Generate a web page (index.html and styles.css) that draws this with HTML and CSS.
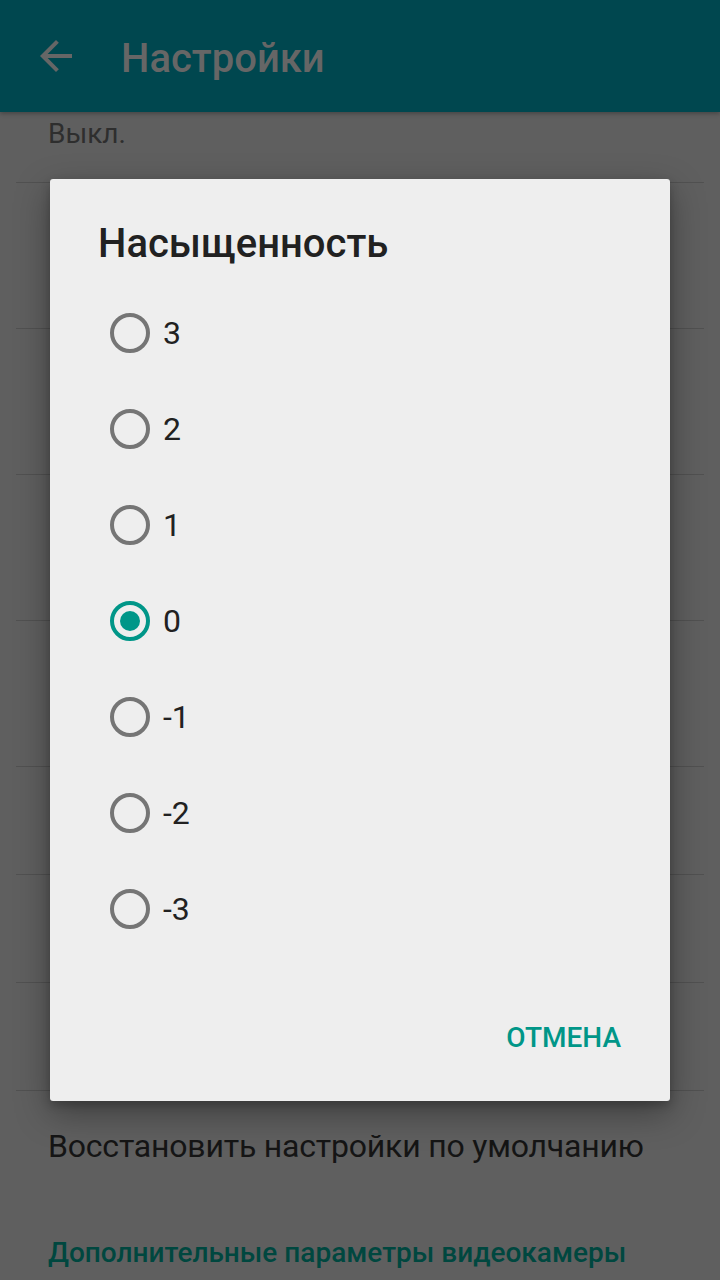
FILE: index.html
```html
<!DOCTYPE html>
<html lang="ru">
<head>
<meta charset="utf-8">
<title>Настройки</title>
<link rel="stylesheet" href="styles.css">
</head>
<body>
<div class="screen">
  <header class="appbar">
    <svg class="back" viewBox="0 0 24 24" width="48" height="48" aria-hidden="true">
      <path d="M20 11H7.83l5.59-5.59L12 4l-8 8 8 8 1.41-1.41L7.83 13H20v-2z" fill="#666666"/>
    </svg>
    <h1 class="appbar-title">Настройки</h1>
  </header>

  <main class="list">
    <div class="row row-first"><span class="summary">Выкл.</span></div>
    <div class="divider"></div>
    <div class="row row-tall"></div>
    <div class="divider"></div>
    <div class="row row-tall"></div>
    <div class="divider"></div>
    <div class="row row-tall"></div>
    <div class="divider"></div>
    <div class="row row-tall"></div>
    <div class="divider"></div>
    <div class="row row-mid"></div>
    <div class="divider"></div>
    <div class="row row-mid"></div>
    <div class="divider"></div>
    <div class="row row-mid"></div>
    <div class="divider"></div>
    <div class="row row-restore"><span class="restore">Восстановить настройки по умолчанию</span></div>
    <div class="category">Дополнительные параметры видеокамеры</div>
  </main>

  <div class="dialog" role="dialog">
    <h2 class="dialog-title">Насыщенность</h2>
    <ul class="options">
      <li class="option"><span class="radio"></span><span class="label">3</span></li>
      <li class="option"><span class="radio"></span><span class="label">2</span></li>
      <li class="option"><span class="radio"></span><span class="label">1</span></li>
      <li class="option"><span class="radio checked"></span><span class="label">0</span></li>
      <li class="option"><span class="radio"></span><span class="label">-1</span></li>
      <li class="option"><span class="radio"></span><span class="label">-2</span></li>
      <li class="option"><span class="radio"></span><span class="label">-3</span></li>
    </ul>
    <div class="actions"><span class="btn">ОТМЕНА</span></div>
  </div>
</div>
</body>
</html>
```

FILE: styles.css
```css
* { box-sizing: border-box; }
html, body {
  margin: 0;
  padding: 0;
}
body {
  width: 720px;
  height: 1280px;
  overflow: hidden;
  background: #5f5f5f;
  font-family: Roboto, "Noto Sans", "DejaVu Sans", sans-serif;
}
.screen {
  position: relative;
  width: 720px;
  height: 1280px;
  overflow: hidden;
}
.appbar {
  height: 112px;
  background: #00474f;
  display: flex;
  align-items: center;
  padding-left: 32px;
  box-shadow: 0 2px 4px rgba(0,0,0,0.25);
  position: relative;
  z-index: 1;
}
.back { display: block; }
.appbar-title {
  margin: 4px 0 0 41px;
  font-size: 40px;
  font-weight: 500;
  color: #666666;
  line-height: 47px;
}
.list {
  display: flex;
  flex-direction: column;
}
.row {
  padding: 0 48px;
  display: flex;
  flex-direction: column;
}
.row-first { height: 70px; padding-top: 5px; }
.row-tall { height: 145px; }
.row-mid { height: 107px; }
.row-restore { height: 120px; padding-top: 36px; }
.divider {
  height: 1px;
  margin: 0 16px;
  background: #515151;
}
.summary {
  font-size: 28px;
  color: #2e2e2e;
  line-height: 33px;
}
.restore {
  font-size: 32px;
  letter-spacing: -0.2px;
  color: #151515;
  line-height: 38px;
}
.category {
  padding: 25px 48px 0;
  font-size: 28px;
  font-weight: 500;
  color: #00473f;
  line-height: 33px;
}
.dialog {
  position: absolute;
  left: 50px;
  top: 179px;
  width: 620px;
  height: 922px;
  background: #eeeeee;
  border-radius: 3px;
  box-shadow: 0 12px 34px rgba(0,0,0,0.35), 0 4px 10px rgba(0,0,0,0.2);
  padding-top: 41px;
  display: flex;
  flex-direction: column;
}
.dialog-title {
  margin: 0 0 18px 48px;
  font-size: 40px;
  font-weight: 500;
  color: #212121;
  line-height: 47px;
}
.options {
  list-style: none;
  margin: 0;
  padding: 0;
}
.option {
  height: 96px;
  display: flex;
  align-items: center;
  padding-left: 60px;
}
.radio {
  width: 40px;
  height: 40px;
  border: 4px solid #757575;
  border-radius: 50%;
  display: flex;
  align-items: center;
  justify-content: center;
  flex: none;
}
.radio.checked { border-color: #009688; }
.radio.checked::after {
  content: "";
  width: 20px;
  height: 20px;
  border-radius: 50%;
  background: #009688;
}
.label {
  margin-left: 13px;
  font-size: 32px;
  color: #212121;
  line-height: 38px;
}
.actions {
  display: flex;
  justify-content: flex-end;
  padding-right: 49px;
  margin-top: 64px;
}
.btn {
  font-size: 28px;
  font-weight: 500;
  color: #009688;
  line-height: 33px;
}
```
